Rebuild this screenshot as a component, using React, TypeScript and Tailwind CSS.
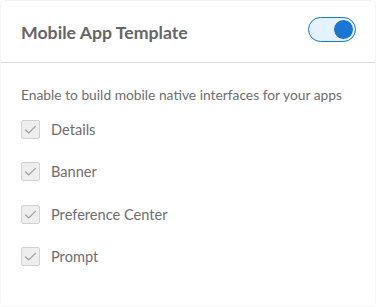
import React from "react";

const Check = () => (
  <div className="w-[19px] h-[19px] rounded-[2px] border border-[#d2d2d2] bg-[#eeeeee] flex items-center justify-center shrink-0">
    <svg width="17" height="17" viewBox="0 0 17 17" fill="none">
      <path d="M3.6 9 L6.8 11.9 L13.4 5.4" stroke="#a0a0a0" strokeWidth="1.3" strokeLinecap="round" strokeLinejoin="round" />
    </svg>
  </div>
);

export default function App() {
  const items = ["Details", "Banner", "Preference Center", "Prompt"];
  return (
    <div className="w-[376px] h-[307px] bg-white" style={{ fontFamily: "Lato, 'Open Sans', sans-serif" }}>
      <div className="w-full h-full rounded-[6px] border border-[#f5f5f5] overflow-hidden">
        <div className="h-[62px] flex items-center justify-between pl-[20px] pr-[19px] border-b border-[#dcdcdc]">
          <div className="text-[17.7px] font-bold text-[#666666] pt-[4px]">Mobile App Template</div>
          <div className="w-[48px] h-[25px] rounded-full border-[1.5px] border-[#1976d2] bg-[#e3f2fd] flex items-center justify-end pr-[1px] -mt-[5px]">
            <div className="w-[21px] h-[21px] rounded-full bg-[#1976d2] border-[1.5px] border-white" />
          </div>
        </div>
        <div className="pl-[20px] pt-[22px]">
          <div className="text-[13.8px] text-[#6e6e6e] leading-[20px]">Enable to build mobile native interfaces for your apps</div>
          <div className="flex flex-col gap-[23.3px] mt-[15px]">
            {items.map((t) => (
              <div key={t} className="flex items-center gap-[11px] h-[19px]">
                <Check />
                <span className="text-[14.6px] text-[#6e6e6e] leading-[19px]">{t}</span>
              </div>
            ))}
          </div>
        </div>
      </div>
    </div>
  );
}
